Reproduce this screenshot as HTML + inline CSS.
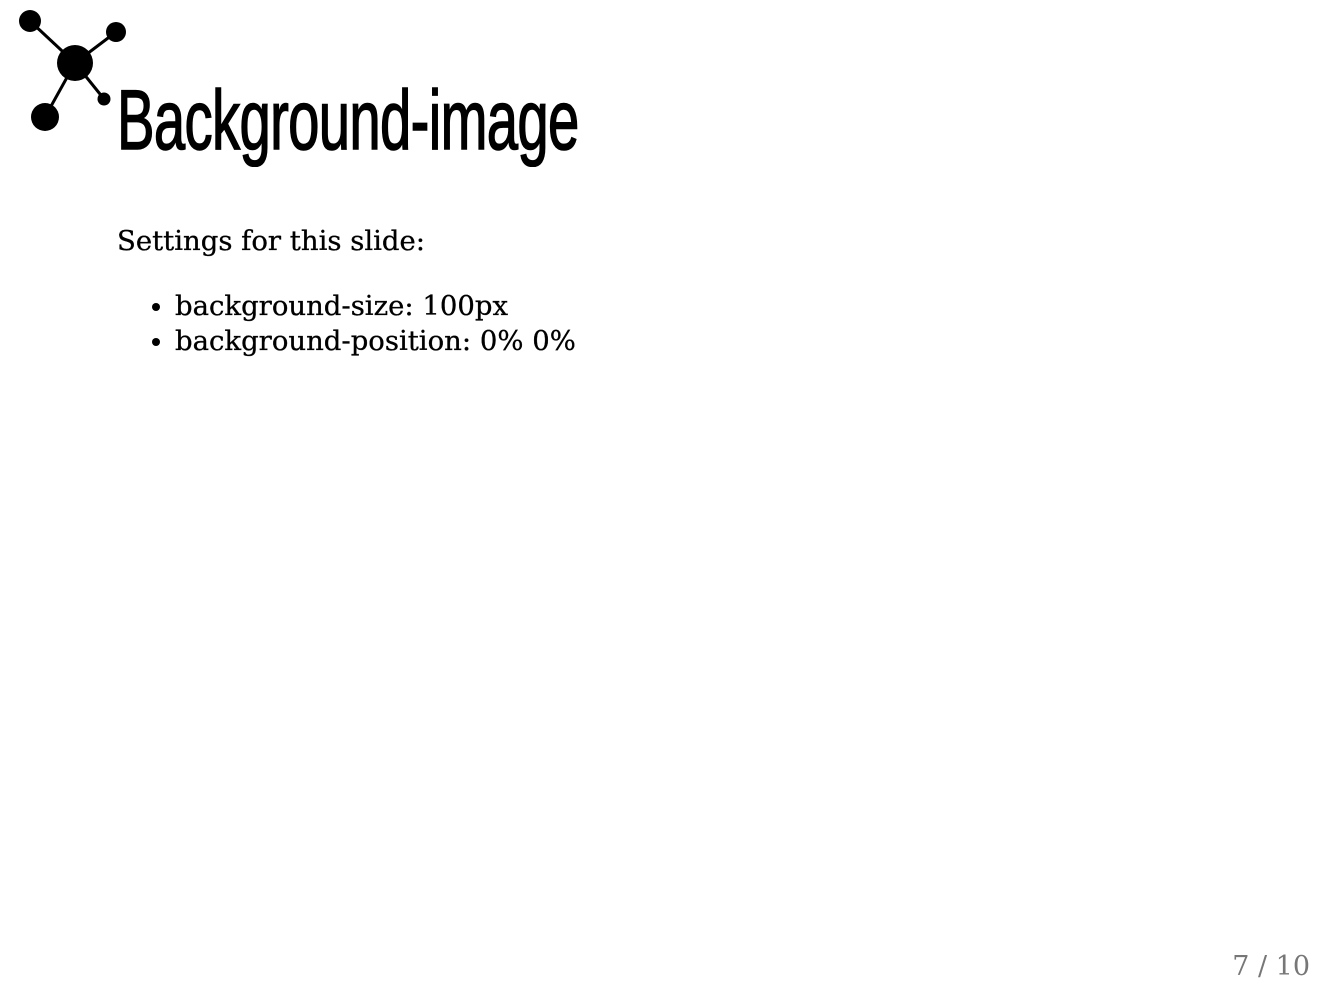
<!DOCTYPE html>
<html><head><style>
body{margin:0;width:1335px;height:1003px;background:#fff;position:relative;overflow:hidden;font-family:"DejaVu Serif",serif;}
.t{position:absolute;left:117px;top:70px;font-family:"Liberation Sans",sans-serif;font-size:84px;line-height:100px;transform:scaleX(0.67);transform-origin:0 0;white-space:nowrap;letter-spacing:-1px;-webkit-text-stroke:1.5px #000}
.p{position:absolute;left:117px;top:224px;font-size:27.5px;line-height:35px;white-space:nowrap;-webkit-text-stroke:0.3px #000}
ul{position:absolute;left:117px;top:289px;margin:0;padding-left:58px;font-size:27.5px;line-height:35px;white-space:nowrap;-webkit-text-stroke:0.3px #000}
.f{position:absolute;right:25px;top:951px;font-size:27px;color:#777;}
</style></head><body>
<svg style="position:absolute;left:0;top:0" width="140" height="140">
<g stroke="#000" stroke-width="3"><line x1="30" y1="21" x2="75" y2="63"/><line x1="116" y1="32" x2="75" y2="63"/><line x1="45" y1="117" x2="75" y2="63"/><line x1="104" y1="99" x2="75" y2="63"/></g>
<circle cx="30" cy="21" r="11"/><circle cx="116" cy="32" r="10"/><circle cx="75" cy="63" r="18"/><circle cx="45" cy="117" r="14"/><circle cx="104" cy="99" r="6.5"/>
</svg>
<div class="t">Background-image</div>
<div class="p">Settings for this slide:</div>
<ul><li>background-size: 100px</li><li>background-position: 0% 0%</li></ul>
<div class="f">7 / 10</div>
</body></html>
